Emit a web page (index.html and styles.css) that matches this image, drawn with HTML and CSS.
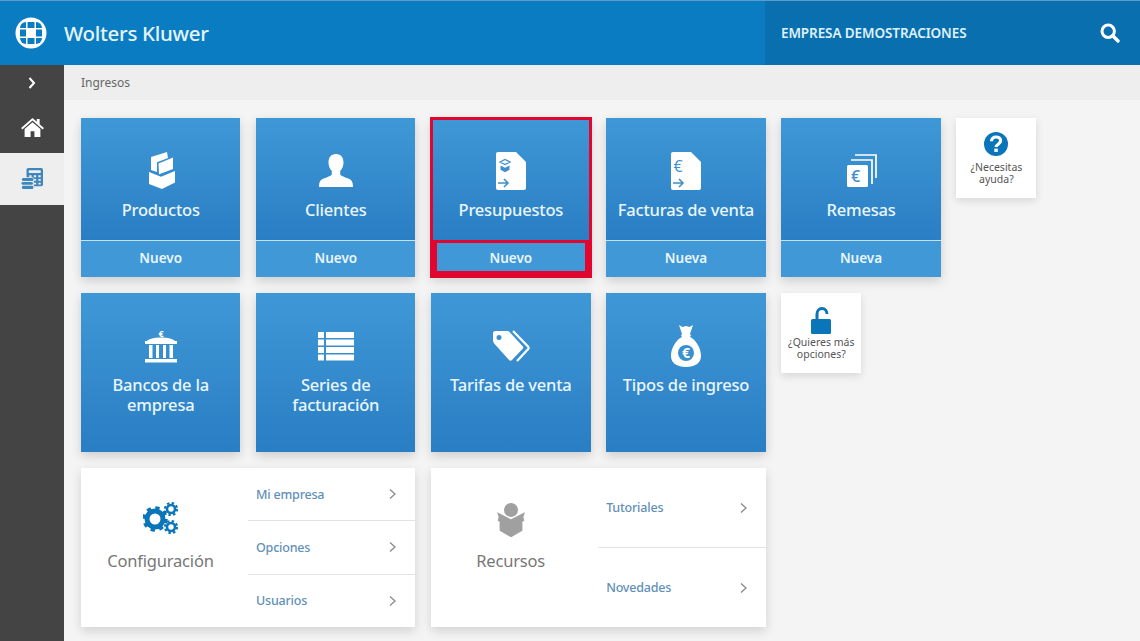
FILE: index.html
```html
<!DOCTYPE html>
<html lang="es">
<head>
    <meta charset="UTF-8">
    <title>Ingresos</title>
    <link rel="stylesheet" href="styles.css">
</head>
<body>
    <header class="topbar">
        <div class="brand">
            <svg class="brand-logo" viewBox="0 0 32 32">
                <circle cx="16" cy="16" r="15.5" fill="#fff"/>
                <rect x="5" y="5" width="22" height="22" rx="6" fill="#0a7cc1"/>
                <path fill="#fff" d="M11 5h1.500v22H11zM19.500 5H21v22h-1.500zM5 11h22v1.500H5zM5 19.500h22V21H5z"/>
                <path fill="#fff" d="M12 12h8v8h-8z"/>
            </svg>
            <span class="brand-name">Wolters Kluwer</span>
        </div>
        <div class="company">
            <span class="company-name">EMPRESA DEMOSTRACIONES</span>
            <svg class="search-icon" viewBox="0 0 20 20">
                <circle cx="8.200" cy="8.200" r="6.200" fill="none" stroke="#fff" stroke-width="3"/>
                <path d="M12.800 12.800L18 18" stroke="#fff" stroke-width="3.400" stroke-linecap="round"/>
            </svg>
        </div>
    </header>

    <div class="layout">
        <nav class="sidebar">
            <div class="side-toggle">
                <svg class="side-chevron" viewBox="0 0 8 12"><path d="M1.500 1l4.500 5-4.500 5" fill="none" stroke="#fff" stroke-width="2"/></svg>
            </div>
            <div class="side-item">
                <svg class="side-home" viewBox="0 0 24 20">
                    <path fill="#fff" d="M12 0L0 10.500l1.300 1.500L12 2.700 22.700 12l1.300-1.500L19.500 6.600V1h-3v3z"/>
                    <path fill="#fff" d="M12 4.500L3.700 11.700V20H10v-6h4v6h6.300v-8.300z"/>
                </svg>
            </div>
            <div class="side-item side-item-active">
                <svg class="side-money" viewBox="0 0 24 24" fill="#3f86bd">
                    <rect x="6" y="0" width="18" height="20" rx="2"/>
                    <path fill="#eee" d="M8.500 2.500h13v3h-13zM9 8h2.500v2H9zM14 8h2.500v2H14zM19 8h2.500v2H19zM14 12h2.500v2H14zM19 12h2.500v2H19zM14 16h2.500v2H14zM19 16h2.500v2H19z"/>
                    <rect x="0" y="10" width="14" height="14" rx="2" fill="#eee"/>
                    <rect x="1" y="11" width="12.500" height="3.200" rx="1.500"/>
                    <rect x="0.500" y="15.200" width="12.500" height="3.200" rx="1.500"/>
                    <rect x="1" y="19.400" width="12.500" height="3.600" rx="1.500"/>
                </svg>
            </div>
        </nav>

        <main class="content">
            <div class="breadcrumb">Ingresos</div>

            <div class="grid">
                <!-- fila 1 -->
                <div class="tile">
                    <div class="tile-main">
                        <svg class="tile-icon" viewBox="0 0 36 36" fill="#fff">
                            <path d="M8 5l16-5 1 6-11 4.200V20l-6-2z"/>
                            <path d="M15.500 11.500L30 5.500V17l-14 5.300z"/>
                            <path d="M6 20l12 4.700L32 19v11.500L19 37 6 32z"/>
                        </svg>
                        <div class="tile-title">Productos</div>
                    </div>
                    <div class="tile-foot">Nuevo</div>
                </div>
                <div class="tile">
                    <div class="tile-main">
                        <svg class="tile-icon" viewBox="0 0 36 36" fill="#fff">
                            <path d="M18 2c5 0 7.500 3.500 7.500 8.500 0 3.500-1.300 6.500-3.300 8.500v3.500c0 1 4 2.500 8 4 3.300 1.300 4.800 3 4.800 8.500H1c0-5.500 1.500-7.200 4.800-8.500 4-1.500 8-3 8-4V19c-2-2-3.300-5-3.300-8.500C10.500 5.500 13 2 18 2z"/>
                        </svg>
                        <div class="tile-title">Clientes</div>
                    </div>
                    <div class="tile-foot">Nuevo</div>
                </div>
                <div class="tile tile-selected">
                    <div class="tile-main">
                        <svg class="tile-icon tile-icon-doc" viewBox="0 0 36 38">
                            <path fill="#fff" d="M5 0h18l10 10v26a2 2 0 0 1-2 2H5a2 2 0 0 1-2-2V2a2 2 0 0 1 2-2z"/>
                            <path fill="none" stroke="#3f8fcc" stroke-width="1.300" d="M7 10l5-2.500 5 2.500-5 2.500z"/>
                            <path fill="#3f8fcc" d="M7.500 13.500l4.500 2.200 4.500-2.200v4.300L12 20.200l-4.500-2.400z"/>
                            <path fill="none" stroke="#3f8fcc" stroke-width="1.600" d="M5 31h10M11 27l4 4-4 4"/>
                        </svg>
                        <div class="tile-title">Presupuestos</div>
                    </div>
                    <div class="tile-foot">Nuevo</div>
                </div>
                <div class="tile">
                    <div class="tile-main">
                        <svg class="tile-icon tile-icon-doc" viewBox="0 0 36 38">
                            <path fill="#fff" d="M5 0h18l10 10v26a2 2 0 0 1-2 2H5a2 2 0 0 1-2-2V2a2 2 0 0 1 2-2z"/>
                            <text x="5.500" y="20" class="svg-euro" font-size="16">€</text>
                            <path fill="none" stroke="#3f8fcc" stroke-width="1.600" d="M5 31h10M11 27l4 4-4 4"/>
                        </svg>
                        <div class="tile-title">Facturas de venta</div>
                    </div>
                    <div class="tile-foot">Nueva</div>
                </div>
                <div class="tile">
                    <div class="tile-main">
                        <svg class="tile-icon" viewBox="0 0 36 36">
                            <path fill="none" stroke="#fff" stroke-width="1.700" d="M12 3h21v23M8 8h21v24"/>
                            <rect x="4" y="13" width="21" height="22" rx="1.500" fill="#fff"/>
                            <text x="8" y="30" class="svg-euro" font-size="16" font-weight="600">€</text>
                        </svg>
                        <div class="tile-title">Remesas</div>
                    </div>
                    <div class="tile-foot">Nueva</div>
                </div>
                <a class="mini-card">
                    <svg class="mini-icon" viewBox="0 0 24 24">
                        <circle cx="12" cy="12" r="12" fill="#0a75b8"/>
                        <path fill="none" stroke="#fff" stroke-width="3.200" d="M7.500 9.200c0-2.700 2-4.200 4.600-4.200s4.500 1.500 4.500 3.800c0 3.500-4.500 3.300-4.500 6.200"/>
                        <rect x="10.300" y="16.600" width="3.500" height="3.300" fill="#fff"/>
                    </svg>
                    <span class="mini-text">¿Necesitas ayuda?</span>
                </a>

                <!-- fila 2 -->
                <div class="tile">
                    <div class="tile-main">
                        <svg class="tile-icon" viewBox="0 0 36 36" fill="#fff">
                            <text x="18" y="10" text-anchor="middle" font-family="'Open Sans', sans-serif" font-weight="700" font-size="9">€</text>
                            <path d="M18 10.500c7 0 12 1.500 14 3.500h2v3H2v-3h2c2-2 7-3.500 14-3.500z"/>
                            <path d="M6 18h3.500v13H6zM13 18h3v13h-3zM20 18h3v13h-3zM26.500 18H30v13h-3.500z"/>
                            <path d="M2 32h32v3.500H2z"/>
                        </svg>
                        <div class="tile-title">Bancos de la empresa</div>
                    </div>
                </div>
                <div class="tile">
                    <div class="tile-main">
                        <svg class="tile-icon" viewBox="0 0 36 36" fill="#fff">
                            <path d="M0 5h6v6H0zM8 5h28v6H8zM0 12.500h6v6H0zM8 12.500h28v6H8zM0 20h6v6H0zM8 20h28v6H8zM0 27.500h6v6H0zM8 27.500h28v6H8z"/>
                        </svg>
                        <div class="tile-title">Series de facturación</div>
                    </div>
                </div>
                <div class="tile">
                    <div class="tile-main">
                        <svg class="tile-icon" viewBox="0 0 36 36" fill="#fff">
                            <path fill-rule="evenodd" d="M2 4h12c1 0 2 .5 2.500 1l13 14c1 1 1 2 0 3L19 33c-1 1-2 1-3 0L2.500 18C1 16.500 0 15 0 13V6c0-1 1-2 2-2zm4 4a2.500 2.500 0 1 0 0 5 2.500 2.500 0 0 0 0-5z"/>
                            <path fill="none" stroke="#fff" stroke-width="2.200" d="M20 4l15 15.500c.8.800.8 2 0 2.800L24 34"/>
                        </svg>
                        <div class="tile-title">Tarifas de venta</div>
                    </div>
                </div>
                <div class="tile">
                    <div class="tile-main">
                        <svg class="tile-icon tile-icon-bag" viewBox="0 0 30 42">
                            <path fill="#fff" d="M8 0l3.500 2 3.500-1 3.500 1L22 0l-3 9 1 1.500-1 1.500c6 3 11 11 11 19 0 7-6 11-15 11S0 38 0 31c0-8 5-16 11-19l-1-1.500L11 9z"/>
                            <circle cx="15" cy="28" r="8" fill="#3a8fd0"/>
                            <text x="15" y="33" text-anchor="middle" fill="#fff" font-family="'Open Sans', sans-serif" font-weight="700" font-size="14">€</text>
                        </svg>
                        <div class="tile-title">Tipos de ingreso</div>
                    </div>
                </div>
                <a class="mini-card mini-card-lock">
                    <svg class="mini-icon mini-icon-lock" viewBox="0 0 22 27">
                        <path fill="none" stroke="#0a75b8" stroke-width="3" d="M7 13V7c0-3 2-5.500 5-5.500s5 2.500 5 5.500"/>
                        <rect x="1" y="12" width="20" height="15" rx="1.500" fill="#0a75b8"/>
                    </svg>
                    <span class="mini-text">¿Quieres más opciones?</span>
                </a>

                <!-- fila 3 -->
                <section class="panel">
                    <div class="panel-head">
                        <svg class="panel-icon" viewBox="0 0 36 32">
                            <circle cx="12" cy="17" r="8" fill="none" stroke="#0a75b8" stroke-width="5"/>
                            <circle cx="12" cy="17" r="11" fill="none" stroke="#0a75b8" stroke-width="3.500" stroke-dasharray="4.200 4.440"/>
                            <circle cx="28" cy="7" r="4" fill="none" stroke="#0a75b8" stroke-width="2.600"/>
                            <circle cx="28" cy="7" r="6" fill="none" stroke="#0a75b8" stroke-width="2.200" stroke-dasharray="2.400 2.310"/>
                            <circle cx="28" cy="25" r="4" fill="none" stroke="#0a75b8" stroke-width="2.600"/>
                            <circle cx="28" cy="25" r="6" fill="none" stroke="#0a75b8" stroke-width="2.200" stroke-dasharray="2.400 2.310"/>
                        </svg>
                        <div class="panel-title">Configuración</div>
                    </div>
                    <ul class="panel-links">
                        <li><span>Mi empresa</span><svg class="link-chevron" viewBox="0 0 8 12"><path d="M1 1.500L6 6l-5 4.500" fill="none" stroke="#8a8a8a" stroke-width="1.300"/></svg></li>
                        <li><span>Opciones</span><svg class="link-chevron" viewBox="0 0 8 12"><path d="M1 1.500L6 6l-5 4.500" fill="none" stroke="#8a8a8a" stroke-width="1.300"/></svg></li>
                        <li><span>Usuarios</span><svg class="link-chevron" viewBox="0 0 8 12"><path d="M1 1.500L6 6l-5 4.500" fill="none" stroke="#8a8a8a" stroke-width="1.300"/></svg></li>
                    </ul>
                </section>
                <section class="panel">
                    <div class="panel-head">
                        <svg class="panel-icon panel-icon-res" viewBox="0 0 32 36" fill="#a0a0a0">
                            <circle cx="16" cy="7" r="7"/>
                            <path stroke="#fff" stroke-width="1.200" d="M1 8l15 7.500L31 8l-2 6 1 4-2 1v9l-12 7-12-7v-9l-2-1 1-4z"/>
                        </svg>
                        <div class="panel-title">Recursos</div>
                    </div>
                    <ul class="panel-links">
                        <li><span>Tutoriales</span><svg class="link-chevron" viewBox="0 0 8 12"><path d="M1 1.500L6 6l-5 4.500" fill="none" stroke="#8a8a8a" stroke-width="1.300"/></svg></li>
                        <li><span>Novedades</span><svg class="link-chevron" viewBox="0 0 8 12"><path d="M1 1.500L6 6l-5 4.500" fill="none" stroke="#8a8a8a" stroke-width="1.300"/></svg></li>
                    </ul>
                </section>
            </div>
        </main>
    </div>
</body>
</html>
```

FILE: styles.css
```css
html, body {
    margin: 0;
    padding: 0;
    height: 641px;
    overflow: hidden;
    font-family: 'Noto Sans', 'Open Sans', sans-serif;
    background-color: #f4f4f5;
}

/* Barra superior */
.topbar {
    display: flex;
    height: 64px;
    background-color: #0a7cc1;
    border-top: 1px solid #5c9cc6;
}
.brand {
    flex: 1;
    display: flex;
    align-items: center;
    padding-left: 15px;
}
.brand-logo {
    width: 32px;
    height: 32px;
}
.brand-name {
    margin-left: 17px;
    font-size: 20.5px;
    font-weight: 500;
    letter-spacing: -0.3px;
    color: #e4f4fd;
}
.company {
    width: 375px;
    display: flex;
    align-items: center;
    justify-content: space-between;
    box-sizing: border-box;
    padding: 0 20px 0 16px;
    background-color: #0a6fae;
}
.company-name {
    font-size: 13.5px;
    font-weight: 600;
    letter-spacing: -0.1px;
    color: #dff1fb;
}
.search-icon {
    width: 20px;
    height: 20px;
}

/* Lateral */
.layout {
    display: flex;
    height: 576px;
}
.sidebar {
    width: 64px;
    flex-shrink: 0;
    background-color: #444;
}
.side-toggle {
    height: 36px;
    display: flex;
    align-items: center;
    justify-content: center;
}
.side-chevron {
    width: 8px;
    height: 12px;
}
.side-item {
    height: 52px;
    display: flex;
    align-items: center;
    justify-content: center;
}
.side-item-active {
    background-color: #eee;
}
.side-home {
    width: 23px;
    height: 19px;
}
.side-money {
    width: 22px;
    height: 22px;
}

/* Contenido */
.content {
    flex: 1;
}
.breadcrumb {
    height: 35px;
    line-height: 35px;
    padding-left: 17px;
    background-color: #eee;
    font-size: 12px;
    color: #666;
}
.grid {
    display: grid;
    grid-template-columns: repeat(5, 159.4px) 80px;
    grid-auto-rows: 159px;
    gap: 16px 15.7px;
    padding: 18px 0 0 17px;
}
.tile {
    display: flex;
    flex-direction: column;
    background-color: #3f98d6;
    color: #eaf6fd;
    box-shadow: 0 4px 10px rgba(0, 0, 0, 0.16);
}
.tile-main {
    flex: 1;
    padding-top: 34px;
    text-align: center;
    background: linear-gradient(#3f98d6, #2a7ec4);
}
.tile-icon {
    display: block;
    width: 36px;
    height: 36px;
    margin: 0 auto;
    overflow: visible;
}
.tile-icon-doc {
    height: 38px;
    margin-bottom: -2px;
}
.tile-icon-bag {
    width: 30px;
    height: 42px;
    margin-top: -2px;
    margin-bottom: -4px;
}
.tile-title {
    margin-top: 12px;
    padding: 0 8px;
    font-size: 16.5px;
    font-weight: 500;
    letter-spacing: -0.2px;
    line-height: 20px;
}
.tile-foot {
    height: 36px;
    line-height: 34px;
    border-top: 1px solid #c4e2f6;
    text-align: center;
    font-size: 13.5px;
    font-weight: 600;
    background-color: #4198d6;
}
.tile-selected {
    outline: 3px solid #e2062f;
    outline-offset: -2px;
}
.tile-selected .tile-foot {
    height: 28px;
    line-height: 30px;
    border: 6px solid #e2062f;
    border-top-width: 3px;
}
.svg-euro {
    fill: #3f8fcc;
    font-family: 'Open Sans', sans-serif;
}
.mini-card {
    display: flex;
    flex-direction: column;
    align-items: center;
    width: 80px;
    height: 79.5px;
    padding-top: 14px;
    box-sizing: border-box;
    background-color: #fff;
    box-shadow: 0 3px 8px rgba(0, 0, 0, 0.12);
}
.mini-icon {
    width: 24px;
    height: 24px;
}
.mini-icon-lock {
    width: 22px;
    height: 27px;
    margin-bottom: -3px;
}
.mini-text {
    margin-top: 5px;
    padding: 0 6px;
    font-size: 10.5px;
    line-height: 12px;
    text-align: center;
    color: #555;
}
.panel {
    grid-column: span 2;
    display: flex;
    background-color: #fff;
    box-shadow: 0 4px 10px rgba(0, 0, 0, 0.14);
}
.panel-head {
    width: 159px;
    margin-right: 8px;
    padding-top: 34px;
    text-align: center;
}
.panel-icon {
    display: block;
    width: 36px;
    height: 32px;
    margin: 0 auto;
}
.panel-icon-res {
    height: 36px;
    margin-top: 1px;
    margin-bottom: -5px;
}
.panel-title {
    margin-top: 15px;
    font-size: 16.5px;
    letter-spacing: -0.2px;
    color: #777;
}
.panel-links {
    flex: 1;
    display: flex;
    flex-direction: column;
    margin: 0;
    padding: 0;
    list-style: none;
}
.panel-links li {
    flex: 1;
    display: flex;
    align-items: center;
    justify-content: space-between;
    padding: 0 18px 0 8px;
    border-top: 1px solid #e2e2e2;
    font-size: 12.5px;
    font-weight: 500;
    letter-spacing: -0.2px;
    color: #5f90b8;
}
.panel-links li:first-child {
    border-top: none;
}
.link-chevron {
    width: 8px;
    height: 12px;
}
```
